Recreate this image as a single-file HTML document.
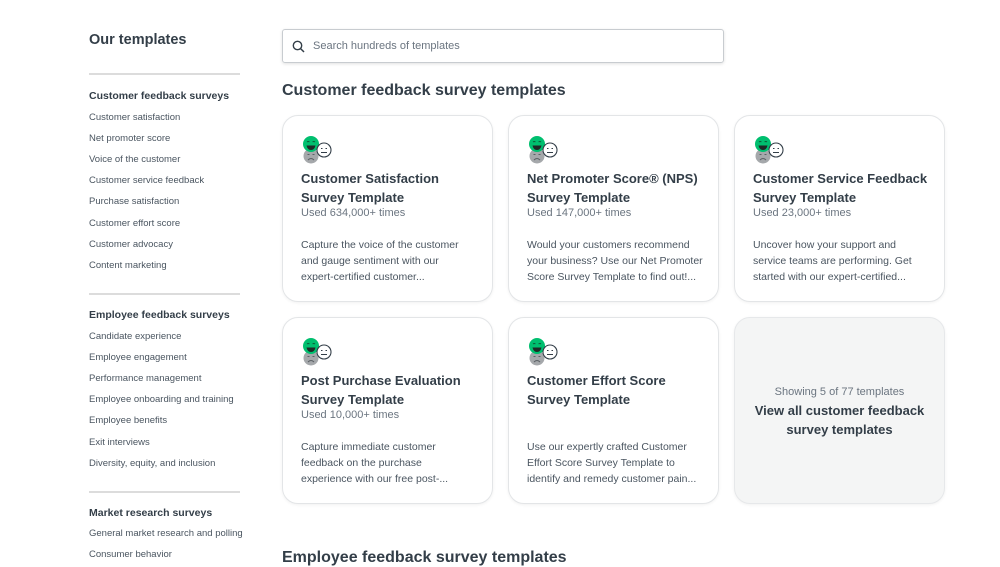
<!DOCTYPE html>
<html><head><meta charset="utf-8"><style>
*{margin:0;padding:0;box-sizing:border-box}
body{width:1000px;height:566px;overflow:hidden;background:#fff;font-family:"Liberation Sans",sans-serif;color:#333e48;position:relative}
.a{position:absolute}
.side{left:89px;top:0;width:151px}
.side h1{position:absolute;top:32px;font-size:14.5px;font-weight:bold;white-space:nowrap;color:#333e48}
.hr{position:absolute;left:0;width:151px;height:2px;background:#dcdcdc}
.sh{position:absolute;font-size:10.5px;font-weight:bold;white-space:nowrap}
.si{position:absolute;font-size:9.5px;color:#4a5560;white-space:nowrap}
.search{left:282px;top:29px;width:442px;height:34px;border:1px solid #c8ccd0;border-radius:3px;box-shadow:0 1px 3px rgba(0,0,0,.12)}
.search span{position:absolute;left:30px;top:10px;font-size:11px;color:#6b7580}
h2{position:absolute;left:282px;font-size:16px;font-weight:bold;color:#333e48;white-space:nowrap}
.card{position:absolute;width:211px;height:187px;border:1px solid #e3e5e7;border-radius:16px;box-shadow:0 1px 3px rgba(0,0,0,.06);background:#fff}
.card svg{position:absolute;left:18px;top:19px}
.t{position:absolute;left:18px;top:53px;white-space:nowrap;font-size:13px;font-weight:bold;line-height:19px;color:#333e48}
.u{position:absolute;left:18px;top:91px;font-size:11px;color:#6b7580}
.d{position:absolute;left:18px;top:121px;white-space:nowrap;font-size:10.5px;line-height:16px;color:#4a5560}
.view{background:#f4f5f5;border-color:#e6e8ea;text-align:center}
</style></head><body>
<div class="a side">
<h1>Our templates</h1>
<div class="hr" style="top:73px"></div>
<div class="sh" style="top:90px">Customer feedback surveys</div>
<div class="si" style="top:112px">Customer satisfaction</div>
<div class="si" style="top:133px">Net promoter score</div>
<div class="si" style="top:154px">Voice of the customer</div>
<div class="si" style="top:175px">Customer service feedback</div>
<div class="si" style="top:196px">Purchase satisfaction</div>
<div class="si" style="top:218px">Customer effort score</div>
<div class="si" style="top:239px">Customer advocacy</div>
<div class="si" style="top:260px">Content marketing</div>
<div class="hr" style="top:293px"></div>
<div class="sh" style="top:309px">Employee feedback surveys</div>
<div class="si" style="top:331px">Candidate experience</div>
<div class="si" style="top:352px">Employee engagement</div>
<div class="si" style="top:373px">Performance management</div>
<div class="si" style="top:394px">Employee onboarding and training</div>
<div class="si" style="top:415px">Employee benefits</div>
<div class="si" style="top:437px">Exit interviews</div>
<div class="si" style="top:458px">Diversity, equity, and inclusion</div>
<div class="hr" style="top:491px"></div>
<div class="sh" style="top:507px">Market research surveys</div>
<div class="si" style="top:528px">General market research and polling</div>
<div class="si" style="top:549px">Consumer behavior</div>
</div>
<div class="a search"><svg class="a" style="left:9px;top:10px" width="13" height="13" viewBox="0 0 13 13"><circle cx="5.5" cy="5.5" r="4.2" fill="none" stroke="#333e48" stroke-width="1.4"/><path d="M8.6 8.6L12 12" stroke="#333e48" stroke-width="1.5"/></svg><span>Search hundreds of templates</span></div>
<h2 style="top:82px">Customer feedback survey templates</h2>
<h2 style="top:549px">Employee feedback survey templates</h2>

<div class="card" style="left:282px;top:115px">ICON<div class="t">Customer Satisfaction<br>Survey Template</div><div class="u">Used 634,000+ times</div><div class="d">Capture the voice of the customer<br>and gauge sentiment with our<br>expert-certified customer...</div></div>
<div class="card" style="left:508px;top:115px">ICON<div class="t">Net Promoter Score® (NPS)<br>Survey Template</div><div class="u">Used 147,000+ times</div><div class="d">Would your customers recommend<br>your business? Use our Net Promoter<br>Score Survey Template to find out!...</div></div>
<div class="card" style="left:734px;top:115px">ICON<div class="t">Customer Service Feedback<br>Survey Template</div><div class="u">Used 23,000+ times</div><div class="d">Uncover how your support and<br>service teams are performing. Get<br>started with our expert-certified...</div></div>
<div class="card" style="left:282px;top:317px">ICON<div class="t">Post Purchase Evaluation<br>Survey Template</div><div class="u">Used 10,000+ times</div><div class="d">Capture immediate customer<br>feedback on the purchase<br>experience with our free post-...</div></div>
<div class="card" style="left:508px;top:317px">ICON<div class="t">Customer Effort Score<br>Survey Template</div><div class="d">Use our expertly crafted Customer<br>Effort Score Survey Template to<br>identify and remedy customer pain...</div></div>
<div class="card view" style="left:734px;top:317px"><div class="a" style="left:0;width:100%;top:68px;font-size:11px;color:#6b7580">Showing 5 of 77 templates</div><div class="a" style="left:0;width:100%;top:83px;font-size:13px;font-weight:bold;line-height:19px">View all customer feedback<br>survey templates</div></div>
<script>
var ic='<svg width="34" height="30" viewBox="0 0 34 30"><circle cx="10" cy="21" r="7.5" fill="#a5a8ab"/><path d="M6.5 19.5h2M11.5 19.5h2M7 25q3-3 6 0" stroke="#5b6065" stroke-width="1" fill="none"/><circle cx="10" cy="9" r="8" fill="#00bf6f"/><path d="M6 7q1.2-1 2.4 0M11.6 7q1.2-1 2.4 0" stroke="#0a5c38" stroke-width="1" fill="none"/><path d="M5.5 10.5h9q-1 4.5-4.5 4.5t-4.5-4.5z" fill="#1d2a26"/><circle cx="23" cy="15" r="7" fill="#fff" stroke="#333e48" stroke-width="1.1"/><path d="M20 13.5h1.5M24.5 13.5h1.5M20 17.5h6" stroke="#333e48" stroke-width="1"/></svg>';
document.querySelectorAll('.card').forEach(function(c){c.innerHTML=c.innerHTML.replace('ICON',ic)});
</script>
</body></html>
